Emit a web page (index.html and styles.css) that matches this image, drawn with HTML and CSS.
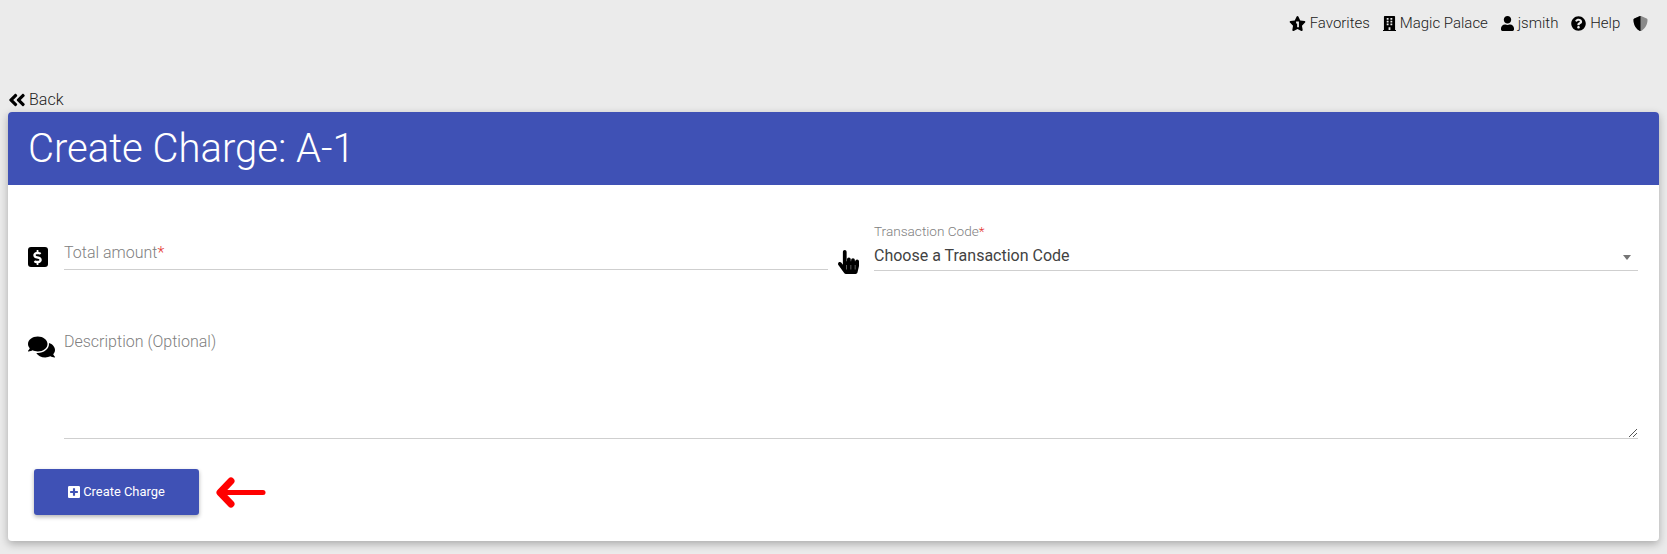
FILE: index.html
```html
<!DOCTYPE html>
<html lang="en">
<head>
<meta charset="utf-8">
<title>Create Charge</title>
<link rel="stylesheet" href="styles.css">
</head>
<body>
<svg class="defs" width="0" height="0" aria-hidden="true">
  <symbol id="i-building" viewBox="0 0 448 512"><path d="M436 480h-20V24c0-13.255-10.745-24-24-24H56C42.745 0 32 10.745 32 24v456H12c-6.627 0-12 5.373-12 12v20h448v-20c0-6.627-5.373-12-12-12zM128 76c0-6.627 5.373-12 12-12h40c6.627 0 12 5.373 12 12v40c0 6.627-5.373 12-12 12h-40c-6.627 0-12-5.373-12-12V76zm0 96c0-6.627 5.373-12 12-12h40c6.627 0 12 5.373 12 12v40c0 6.627-5.373 12-12 12h-40c-6.627 0-12-5.373-12-12v-40zm52 148h-40c-6.627 0-12-5.373-12-12v-40c0-6.627 5.373-12 12-12h40c6.627 0 12 5.373 12 12v40c0 6.627-5.373 12-12 12zm76 160h-64v-84c0-6.627 5.373-12 12-12h40c6.627 0 12 5.373 12 12v84zm64-172c0 6.627-5.373 12-12 12h-40c-6.627 0-12-5.373-12-12v-40c0-6.627 5.373-12 12-12h40c6.627 0 12 5.373 12 12v40zm0-96c0 6.627-5.373 12-12 12h-40c-6.627 0-12-5.373-12-12v-40c0-6.627 5.373-12 12-12h40c6.627 0 12 5.373 12 12v40zm0-96c0 6.627-5.373 12-12 12h-40c-6.627 0-12-5.373-12-12V76c0-6.627 5.373-12 12-12h40c6.627 0 12 5.373 12 12v40z"/></symbol>
  <symbol id="i-star" viewBox="0 0 576 512"><path d="M259.3 17.8L194 150.2 47.9 171.5c-26.2 3.8-36.7 36.1-17.7 54.6l105.7 103-25 145.5c-4.5 26.3 23.2 46 46.4 33.7L288 439.6l130.7 68.7c23.2 12.2 50.9-7.4 46.4-33.7l-25-145.5 105.7-103c19-18.5 8.5-50.8-17.7-54.6L382 150.2 316.7 17.8c-11.7-23.6-45.6-23.9-57.4 0z"/><path fill="#ebebeb" d="M240 190h96v190h-60v-120h-36z"/></symbol>
  <symbol id="i-user" viewBox="0 0 448 512"><path d="M224 256c70.7 0 128-57.3 128-128S294.7 0 224 0 96 57.3 96 128s57.3 128 128 128zm89.6 32h-16.7c-22.2 10.2-46.9 16-72.9 16s-50.6-5.8-72.9-16h-16.7C60.2 288 0 348.2 0 422.4V464c0 26.5 21.5 48 48 48h352c26.5 0 48-21.5 48-48v-41.6c0-74.2-60.2-134.4-134.4-134.4z"/></symbol>
  <symbol id="i-help" viewBox="0 0 512 512"><path d="M504 256c0 136.997-111.043 248-248 248S8 392.997 8 256C8 119.083 119.043 8 256 8s248 111.083 248 248zM262.655 90c-54.497 0-89.255 22.957-116.549 63.758-3.536 5.286-2.353 12.415 2.715 16.258l34.699 26.31c5.205 3.947 12.621 3.008 16.665-2.122 17.864-22.658 30.113-35.797 57.303-35.797 20.429 0 45.698 13.148 45.698 32.958 0 14.976-12.363 22.667-32.534 33.976C247.128 238.528 216 254.941 216 296v4c0 6.627 5.373 12 12 12h56c6.627 0 12-5.373 12-12v-1.333c0-28.462 83.186-29.647 83.186-106.667 0-58.002-60.165-102-116.531-102zM256 338c-25.365 0-46 20.635-46 46 0 25.364 20.635 46 46 46s46-20.636 46-46c0-25.365-20.635-46-46-46z"/></symbol>
  <symbol id="i-shield" viewBox="0 0 512 512"><path fill="#8a8a8a" d="M466.5 83.7l-192-80a48.15 48.15 0 0 0-36.9 0l-192 80C27.7 91.1 16 108.6 16 128c0 198.5 114.5 335.7 221.5 380.3 11.8 4.9 25.1 4.9 36.9 0C360.1 472.6 496 349.3 496 128c0-19.4-11.7-36.9-29.5-44.3z"/><path d="M256 0c-6.3 0-12.5 1.3-18.4 3.7l-192 80C27.7 91.1 16 108.6 16 128c0 198.5 114.5 335.7 221.5 380.3 5.9 2.5 12.2 3.7 18.5 3.7z"/></symbol>
  <symbol id="i-back" viewBox="0 0 448 512"><path d="M223.7 239l136-136c9.4-9.4 24.6-9.4 33.9 0l22.6 22.6c9.4 9.4 9.4 24.6 0 33.9L319.9 256l96.4 96.4c9.4 9.4 9.4 24.6 0 33.9L393.7 409c-9.4 9.4-24.6 9.4-33.9 0l-136-136c-9.5-9.4-9.5-24.6-.1-34zm-192 34l136 136c9.4 9.4 24.6 9.4 33.9 0l22.6-22.6c9.4-9.4 9.4-24.6 0-33.9L127.9 256l96.4-96.4c9.4-9.4 9.4-24.6 0-33.9L201.7 103c-9.4-9.4-24.6-9.4-33.9 0l-136 136c-9.5 9.4-9.5 24.6-.1 34z"/></symbol>
  <symbol id="i-dollar" viewBox="0 0 320 512"><path d="M209.2 233.4l-108-31.6C88.7 198.2 80 186.5 80 173.5c0-16.3 13.2-29.5 29.5-29.5h66.3c12.2 0 24.2 3.7 34.2 10.5 6.1 4.1 14.3 3.1 19.5-2l34.8-34c7.1-6.9 6.1-18.4-1.8-24.5C238 74.8 207.4 64.1 176 64V16c0-8.8-7.2-16-16-16h-32c-8.8 0-16 7.2-16 16v48h-2.5C45.8 64-5.4 118.7.5 183.6c4.2 46.1 39.4 83.6 83.8 96.6l102.5 30c12.5 3.7 21.2 15.3 21.2 28.3 0 16.3-13.2 29.5-29.5 29.5h-66.3C100 368 88 364.3 78 357.5c-6.1-4.1-14.3-3.1-19.5 2l-34.8 34c-7.1 6.9-6.1 18.4 1.8 24.5 24.5 19.2 55.1 29.9 86.5 30v48c0 8.8 7.2 16 16 16h32c8.8 0 16-7.2 16-16v-48.2c46.6-.9 90.3-28.6 105.7-72.7 21.5-61.6-14.6-124.8-72.5-141.7z"/></symbol>
  <symbol id="i-comments" viewBox="0 0 576 512"><path d="M416 192c0-88.4-93.1-160-208-160S0 103.6 0 192c0 34.3 14.1 65.9 38 92-13.4 30.2-35.5 54.2-35.8 54.5-2.2 2.3-2.8 5.7-1.5 8.7S4.8 352 8 352c36.6 0 66.9-12.3 88.7-25 32.2 15.7 70.3 25 111.3 25 114.9 0 208-71.6 208-160zm122 220c23.9-26 38-57.7 38-92 0-66.9-53.5-124.2-129.3-148.1.9 6.6 1.3 13.3 1.3 20.1 0 105.9-107.7 192-240 192-10.8 0-21.3-.8-31.7-1.9C207.8 439.6 281.8 480 368 480c41 0 79.1-9.2 111.3-25 21.8 12.7 52.1 25 88.7 25 3.2 0 6.1-1.9 7.3-4.8 1.3-2.9.7-6.3-1.5-8.7-.3-.3-22.4-24.2-35.8-54.5z"/></symbol>
  <symbol id="i-hand" viewBox="0 0 448 512"><path d="M448 240v96c0 3.084-.356 6.159-1.063 9.162l-32 136C410.686 499.23 394.562 512 376 512H168a40.004 40.004 0 0 1-32.35-16.473l-127.997-176c-12.993-17.866-9.043-42.883 8.822-55.876 17.867-12.994 42.884-9.043 55.877 8.823L104 315.992V40c0-22.091 17.908-40 40-40s40 17.909 40 40v200h8v-40c0-22.091 17.908-40 40-40s40 17.909 40 40v40h8v-24c0-22.091 17.908-40 40-40s40 17.909 40 40v24h8c0-22.091 17.908-40 40-40s40 17.909 40 40zm-256 80h-8v96h8v-96zm88 0h-8v96h8v-96zm88 0h-8v96h8v-96z"/></symbol>
  <symbol id="i-plus" viewBox="0 0 448 512"><path d="M400 32H48C21.5 32 0 53.5 0 80v352c0 26.5 21.5 48 48 48h352c26.5 0 48-21.5 48-48V80c0-26.5-21.5-48-48-48zm-32 252c0 6.6-5.4 12-12 12h-92v92c0 6.6-5.4 12-12 12h-56c-6.6 0-12-5.4-12-12v-92H92c-6.6 0-12-5.4-12-12v-56c0-6.6 5.4-12 12-12h92v-92c0-6.6 5.4-12 12-12h56c6.6 0 12 5.4 12 12v92h92c6.6 0 12 5.4 12 12v56z"/></symbol>
</svg>

<nav class="topnav">
  <a class="navitem"><svg class="ico ico-star"><use href="#i-star"/></svg>Favorites</a>
  <a class="navitem"><svg class="ico ico-building"><use href="#i-building"/></svg>Magic Palace</a>
  <a class="navitem"><svg class="ico ico-user"><use href="#i-user"/></svg>jsmith</a>
  <a class="navitem"><svg class="ico ico-help"><use href="#i-help"/></svg>Help</a>
  <a class="navitem"><svg class="ico ico-shield"><use href="#i-shield"/></svg></a>
</nav>

<a class="back"><svg class="ico ico-back"><use href="#i-back"/></svg>Back</a>

<main class="card">
  <header class="card-head"><h1 class="title">Create Charge: A-1</h1></header>
  <div class="card-body">
    <div class="row-top">
      <div class="field field-amount">
        <span class="dollar-box"><svg class="ico-dollar"><use href="#i-dollar"/></svg></span>
        <div class="control">
          <div class="placeholder">Total amount<span class="req">*</span></div>
        </div>
      </div>
      <div class="field field-code">
        <div class="hand-wrap"><svg class="ico-hand"><use href="#i-hand"/></svg></div>
        <div class="control control-select">
          <div class="float-label">Transaction Code<span class="req">*</span></div>
          <div class="select-value">Choose a Transaction Code<span class="caret"></span></div>
        </div>
      </div>
    </div>
    <div class="field field-desc">
      <svg class="ico-comments"><use href="#i-comments"/></svg>
      <div class="control control-area">
        <div class="placeholder">Description (Optional)</div>
        <svg class="grip" viewBox="0 0 8 8"><path d="M0 8L8 0M4 8L8 4"/></svg>
      </div>
    </div>
    <div class="actions">
      <button class="btn" type="button"><svg class="ico-plus"><use href="#i-plus"/></svg><span class="btn-label">Create Charge</span></button>
      <svg class="arrow" viewBox="0 0 50 31"><path class="arrow-shaft" d="M4 15.5H47"/><path class="arrow-head" d="M15 4L4 15.5L15 27"/></svg>
    </div>
  </div>
</main>
</body>
</html>
```

FILE: styles.css
```css
* { box-sizing: border-box; }
html, body { margin: 0; padding: 0; }
body {
  height: 554px;
  overflow: hidden;
  background: #ebebeb;
  font-family: Roboto, "Liberation Sans", sans-serif;
  font-weight: 300;
  color: #212121;
}
.defs { position: absolute; }
.ico { fill: #000; flex: none; }

.topnav {
  height: 88px;
  padding: 14px 19px 0 0;
  display: flex;
  justify-content: flex-end;
  align-items: flex-start;
  gap: 12.75px;
  font-size: 15px;
  line-height: 18px;
}
.navitem { display: flex; align-items: center; gap: 4px; height: 18px; }
.ico-star { width: 17px; height: 15px; }
.ico-building { width: 13px; height: 15px; }
.ico-user { width: 13px; height: 15px; }
.ico-help { width: 15px; height: 15px; }
.ico-shield { width: 15px; height: 15px; }

.back {
  display: flex;
  align-items: center;
  gap: 3px;
  height: 24px;
  padding-left: 8px;
  font-size: 16px;
  line-height: 20px;
}
.ico-back { width: 18px; height: 20px; }

.card {
  margin: 0 8px;
  height: 429px;
  background: #fff;
  border-radius: 4px;
  box-shadow: 0 3px 8px rgba(0,0,0,.28);
  overflow: hidden;
}
.card-head {
  height: 73px;
  background: #3f51b5;
  padding: 0 20px;
  display: flex;
  align-items: center;
}
.title {
  margin: 0;
  font-size: 40px;
  font-weight: 300;
  line-height: 56px;
  color: #fff;
}

.card-body { padding: 0 21px 0 20px; }
.row-top { display: flex; height: 100px; }
.field { display: flex; }
.field-amount { width: 800px; padding-top: 47px; }
.dollar-box {
  width: 20px;
  height: 20px;
  margin: 15px 0 0 0;
  background: #000;
  border-radius: 3px;
  display: flex;
  align-items: center;
  justify-content: center;
  flex: none;
}
.ico-dollar { width: 10px; height: 15px; fill: #fff; }
.control { position: relative; border-bottom: 1px solid #cfcfcf; }
.field-amount .control { margin-left: 16px; width: 764px; height: 38px; }
.placeholder { font-size: 16px; line-height: 20px; color: #808080; padding-top: 11px; }
.req { color: #e53935; }

.field-code { flex: 1; padding-top: 37px; }
.hand-wrap { width: 46px; flex: none; padding-top: 28px; }
.ico-hand { width: 21px; height: 24px; fill: #000; display: block; margin-left: 10px; }
.control-select { flex: 1; height: 49px; }
.float-label { font-size: 13.6px; line-height: 14px; color: #808080; padding-top: 2px; height: 17px; }
.select-value {
  font-size: 16px;
  font-weight: 400;
  line-height: 20px;
  color: #424242;
  padding-top: 7px;
}
.caret {
  position: absolute;
  right: 7px;
  top: 33px;
  border-left: 4px solid transparent;
  border-right: 4px solid transparent;
  border-top: 5px solid #757575;
}

.ico-comments { width: 27px; height: 24px; fill: #000; flex: none; margin: 50px 0 0 0; }
.control-area { margin: 45px 0 0 9px; width: 1574px; height: 109px; }
.control-area .placeholder { padding-top: 2px; }
.grip {
  position: absolute;
  right: 1px;
  bottom: 1px;
  width: 8px;
  height: 8px;
  fill: none;
  stroke: #555;
  stroke-width: 1;
}

.actions { display: flex; align-items: center; gap: 17px; padding: 30px 0 0 6px; }
.btn {
  width: 165px;
  height: 46px;
  border: 0;
  border-radius: 3px;
  background: #3f51b5;
  color: #fff;
  font-family: inherit;
  font-size: 12.9px;
  font-weight: 400;
  display: flex;
  align-items: center;
  justify-content: center;
  gap: 3px;
  box-shadow: 0 2px 4px rgba(0,0,0,.3);
}
.btn-label { margin-bottom: 1px; }
.ico-plus { width: 12px; height: 14px; fill: #fff; }
.arrow {
  width: 50px;
  height: 31px;
  fill: none;
  stroke: #f00;
  stroke-linecap: round;
  stroke-linejoin: round;
}
.arrow-shaft { stroke-width: 5; }
.arrow-head { stroke-width: 7; }
```
